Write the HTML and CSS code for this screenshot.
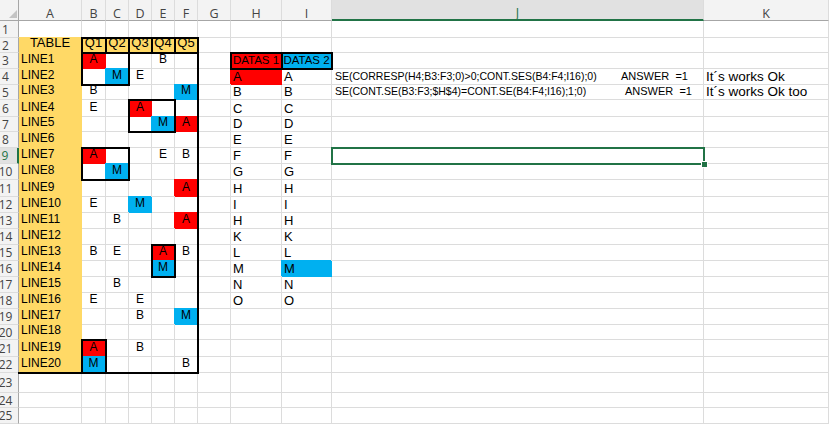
FILE: index.html
```html
<!DOCTYPE html>
<html>
<head>
<meta charset="utf-8">
<title>Planilha</title>
<link rel="stylesheet" href="styles.css">
</head>
<body>
<div class="sheet">
<div class="cells">
<div class="corner"><span class="tri"></span></div><div class="ch">A</div><div class="ch">B</div><div class="ch">C</div><div class="ch">D</div><div class="ch">E</div><div class="ch">F</div><div class="ch">G</div><div class="ch">H</div><div class="ch">I</div><div class="ch sel">J</div><div class="ch">K</div>
<div class="rh">1</div><div></div><div></div><div></div><div></div><div></div><div></div><div></div><div></div><div></div><div></div><div></div>
<div class="rh">2</div><div class="y q">TABLE</div><div class="y q">Q1</div><div class="y q">Q2</div><div class="y q">Q3</div><div class="y q">Q4</div><div class="y q">Q5</div><div></div><div></div><div></div><div></div><div></div>
<div class="rh">3</div><div class="y">LINE1</div><div class="r m">A</div><div></div><div></div><div class="m">B</div><div></div><div></div><div class="r dat">DATAS 1</div><div class="b dat">DATAS 2</div><div></div><div></div>
<div class="rh">4</div><div class="y">LINE2</div><div></div><div class="b m">M</div><div class="m">E</div><div></div><div></div><div></div><div class="r big">A</div><div class="big">A</div><div class="f"><span class="fx">SE(CORRESP(H4;B3:F3;0)&gt;0;CONT.SES(B4:F4;I16);0)</span><span class="ans">ANSWER  =1</span></div><div class="ok">It´s works Ok</div>
<div class="rh">5</div><div class="y">LINE3</div><div class="m">B</div><div></div><div></div><div></div><div class="b m">M</div><div></div><div class="big">B</div><div class="big">B</div><div class="f"><span class="fx">SE(CONT.SE(B3:F3;$H$4)=CONT.SE(B4:F4;I16);1;0)</span><span class="ans lo">ANSWER  =1</span></div><div class="ok">It´s works Ok too</div>
<div class="rh">6</div><div class="y">LINE4</div><div class="m">E</div><div></div><div class="r m">A</div><div></div><div></div><div></div><div class="big">C</div><div class="big">C</div><div></div><div></div>
<div class="rh">7</div><div class="y">LINE5</div><div></div><div></div><div></div><div class="b m">M</div><div class="r m">A</div><div></div><div class="big">D</div><div class="big">D</div><div></div><div></div>
<div class="rh">8</div><div class="y">LINE6</div><div></div><div></div><div></div><div></div><div></div><div></div><div class="big">E</div><div class="big">E</div><div></div><div></div>
<div class="rh sel">9</div><div class="y">LINE7</div><div class="r m">A</div><div></div><div></div><div class="m">E</div><div class="m">B</div><div></div><div class="big">F</div><div class="big">F</div><div></div><div></div>
<div class="rh">10</div><div class="y">LINE8</div><div></div><div class="b m">M</div><div></div><div></div><div></div><div></div><div class="big">G</div><div class="big">G</div><div></div><div></div>
<div class="rh">11</div><div class="y">LINE9</div><div></div><div></div><div></div><div></div><div class="r m">A</div><div></div><div class="big">H</div><div class="big">H</div><div></div><div></div>
<div class="rh">12</div><div class="y">LINE10</div><div class="m">E</div><div></div><div class="b m">M</div><div></div><div></div><div></div><div class="big">I</div><div class="big">I</div><div></div><div></div>
<div class="rh">13</div><div class="y">LINE11</div><div></div><div class="m">B</div><div></div><div></div><div class="r m">A</div><div></div><div class="big">H</div><div class="big">H</div><div></div><div></div>
<div class="rh">14</div><div class="y">LINE12</div><div></div><div></div><div></div><div></div><div></div><div></div><div class="big">K</div><div class="big">K</div><div></div><div></div>
<div class="rh">15</div><div class="y">LINE13</div><div class="m">B</div><div class="m">E</div><div></div><div class="r m">A</div><div class="m">B</div><div></div><div class="big">L</div><div class="big">L</div><div></div><div></div>
<div class="rh">16</div><div class="y">LINE14</div><div></div><div></div><div></div><div class="b m">M</div><div></div><div></div><div class="big">M</div><div class="b big">M</div><div></div><div></div>
<div class="rh">17</div><div class="y">LINE15</div><div></div><div class="m">B</div><div></div><div></div><div></div><div></div><div class="big">N</div><div class="big">N</div><div></div><div></div>
<div class="rh">18</div><div class="y">LINE16</div><div class="m">E</div><div></div><div class="m">E</div><div></div><div></div><div></div><div class="big">O</div><div class="big">O</div><div></div><div></div>
<div class="rh">19</div><div class="y">LINE17</div><div></div><div></div><div class="m">B</div><div></div><div class="b m">M</div><div></div><div></div><div></div><div></div><div></div>
<div class="rh">20</div><div class="y">LINE18</div><div></div><div></div><div></div><div></div><div></div><div></div><div></div><div></div><div></div><div></div>
<div class="rh">21</div><div class="y">LINE19</div><div class="r m">A</div><div></div><div class="m">B</div><div></div><div></div><div></div><div></div><div></div><div></div><div></div>
<div class="rh">22</div><div class="y">LINE20</div><div class="b m">M</div><div></div><div></div><div></div><div class="m">B</div><div></div><div></div><div></div><div></div><div></div>
<div class="rh">23</div><div></div><div></div><div></div><div></div><div></div><div></div><div></div><div></div><div></div><div></div><div></div>
<div class="rh">24</div><div></div><div></div><div></div><div></div><div></div><div></div><div></div><div></div><div></div><div></div><div></div>
<div class="rh">25</div><div></div><div></div><div></div><div></div><div></div><div></div><div></div><div></div><div></div><div></div><div></div>
</div>

<!-- borders and selection drawn over the cells -->
<div class="marks">
<div class="frame"></div>
<div class="b2"></div><div class="c2"></div><div class="d2"></div><div class="e2"></div><div class="f2"></div>
<div class="h3"></div><div class="i3"></div>
<div class="b3c4"></div>
<div class="d6e7"></div>
<div class="b9c10"></div>
<div class="e15e16"></div>
<div class="b21b22"></div>
<div class="j9"></div>
<div class="handle"></div>
</div>
</div>
</body>
</html>
```

FILE: styles.css
```css
body{
	margin:0;
	background:#fff;
}

.sheet{
	display:grid;
	width:829px;
	height:424px;
	overflow:hidden;
	font-family:"Liberation Sans", Arial, sans-serif;
	font-size:12px;
	color:#000;
}

.cells, .marks{
	grid-area:1 / 1;
	display:grid;
	grid-template-columns:19px 63px 24px 23px 23px 23px 23px 33px 51px 50px 372px 125px;
	grid-template-rows:21px 17px 15px 16px 16px 15px 17px 15px 16px 16px 16px 17px 16px 16px 16px 16px 16px 16px 16px 16px 15px 17px 16px 20px 15px 16px;
}

/* cells */
.cells div{
	box-sizing:border-box;
	display:flex;
	align-items:flex-end;
	overflow:hidden;
	white-space:nowrap;
	padding:0 2px 1px;
	line-height:15px;
	border-right:1px solid #dcdcdc;
	border-bottom:1px solid #dcdcdc;
}

/* headers */
.cells .corner, .cells .ch, .cells .rh{
	background:#f3f3f3;
	font-family:"Open Sans", "Liberation Sans", sans-serif;
	color:#444;
}
.cells .corner{
	justify-content:flex-end;
	padding:0 1px 2px 0;
	border-right-color:#a6a6a6;
	border-bottom-color:#a6a6a6;
}
.tri{
	width:8px;
	height:8px;
	background:#c4c4c4;
	clip-path:polygon(100% 0, 100% 100%, 0 100%);
}
.cells .ch{
	justify-content:center;
	padding:0;
	font-size:12.5px;
	line-height:13px;
	border-bottom-color:#a6a6a6;
}
.cells .rh{
	justify-content:center;
	align-items:center;
	padding:0 7px 0 0;
	font-size:12px;
	border-right-color:#a6a6a6;
}
.cells .ch.sel{
	background:#e1e1e1;
	color:#217346;
	border-bottom:2px solid #217346;
}
.cells .rh.sel{
	background:#e1e1e1;
	color:#217346;
	border-right:2px solid #217346;
}

/* fills hide the gridlines round them */
.cells .y{
	background:#ffd966;
	border-color:#ffd966;
	box-shadow:0 -1px 0 #ffd966;
}
.cells .r{
	background:#f00;
	border-color:#f00;
	box-shadow:-1px -1px 0 #f00;
}
.cells .b{
	background:#00b0f0;
	border-color:#00b0f0;
	box-shadow:-1px -1px 0 #00b0f0;
}

.cells .m{
	justify-content:center;
	padding:0 0 1px;
}
.cells .q{
	justify-content:center;
	align-items:flex-start;
	padding:0;
	font-size:13px;
	line-height:9px;
}
.cells .dat{
	justify-content:center;
	padding:0 0 1px;
	font-size:11.5px;
	line-height:14px;
}
.cells .big{
	font-size:13px;
	padding-bottom:0;
}
.cells .f{
	padding:0 3px;
	font-size:10.5px;
}
.fx{
	flex:none;
	width:286px;
}
.ans{
	font-size:11px;
	white-space:pre;
}
.ans.lo{
	padding-left:4px;
}
.cells .ok{
	font-size:13.5px;
	padding-bottom:0;
}

/* thick borders */
.marks{
	pointer-events:none;
}
.marks div{
	margin:-1px;
	border:2px solid #000;
}
.marks .frame{
	grid-area:3 / 2 / 24 / 8;
	border-width:0 2px 2px 0;
}
.marks .b2{ grid-area:3 / 3 / 4 / 4; }
.marks .c2{ grid-area:3 / 4 / 4 / 5; }
.marks .d2{ grid-area:3 / 5 / 4 / 6; }
.marks .e2{ grid-area:3 / 6 / 4 / 7; }
.marks .f2{ grid-area:3 / 7 / 4 / 8; }
.marks .h3{ grid-area:4 / 9 / 5 / 10; }
.marks .i3{ grid-area:4 / 10 / 5 / 11; }
.marks .b3c4{ grid-area:4 / 3 / 6 / 5; }
.marks .d6e7{ grid-area:7 / 5 / 9 / 7; }
.marks .b9c10{ grid-area:10 / 3 / 12 / 5; }
.marks .e15e16{ grid-area:16 / 6 / 18 / 7; }
.marks .b21b22{ grid-area:22 / 3 / 24 / 4; }

/* selected cell */
.marks .j9{
	grid-area:10 / 11 / 11 / 12;
	border-color:#217346;
}
.marks .handle{
	grid-area:10 / 11 / 11 / 12;
	justify-self:end;
	align-self:end;
	width:5px;
	height:5px;
	margin:0 -4px -4px 0;
	border:1px solid #fff;
	background:#217346;
}
```
